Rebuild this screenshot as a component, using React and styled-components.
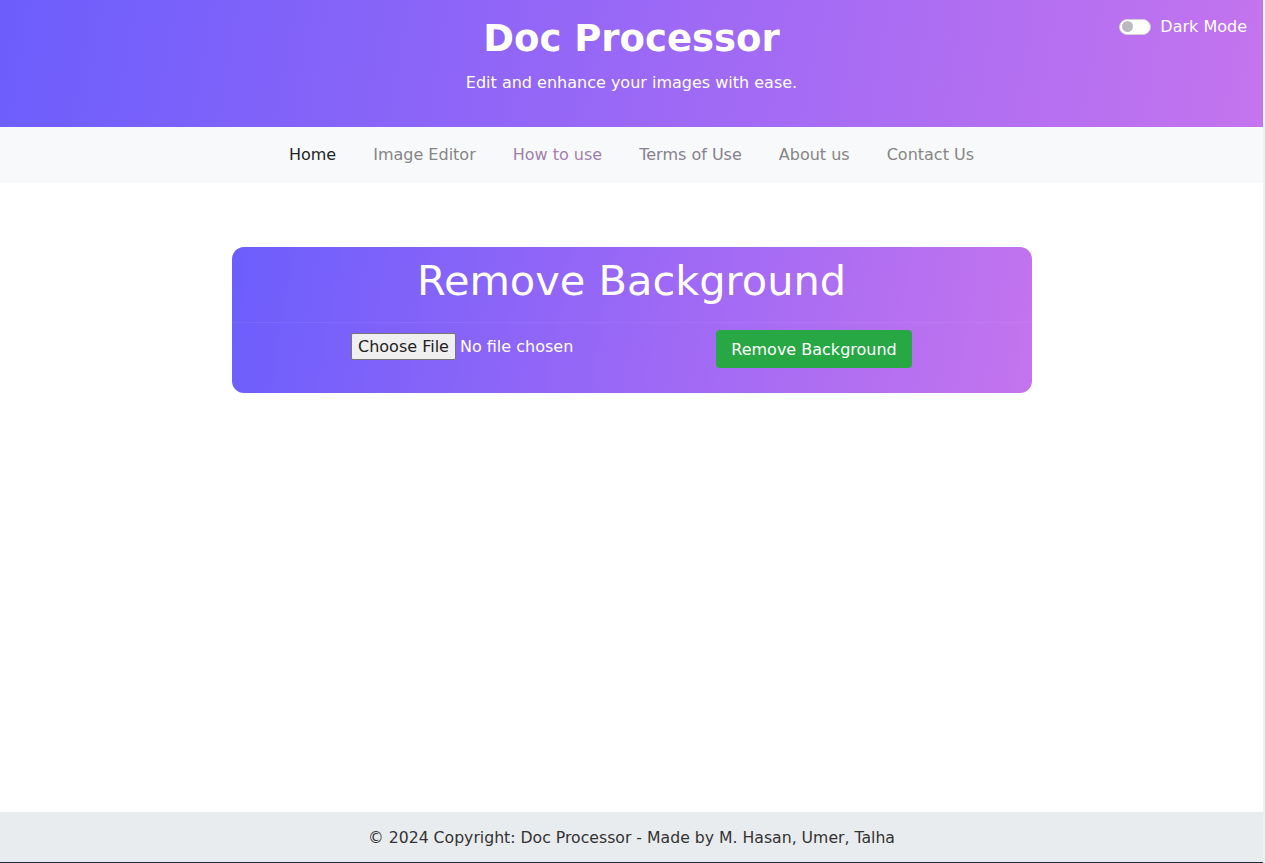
import React from "react";
import styled, { createGlobalStyle } from "styled-components";

const GlobalStyle = createGlobalStyle`
  html, body {
    margin: 0;
    padding: 0;
    background: #fff;
    font-family: "DejaVu Sans", "Liberation Sans", sans-serif;
  }
  * { box-sizing: border-box; }
`;

const Page = styled.div`
  min-height: 100vh;
  display: flex;
  flex-direction: column;
  border-right: 2px solid #f0f0f0;
`;

const Header = styled.header`
  position: relative;
  height: 127px;
  background: linear-gradient(100deg, #6c5efc 0%, #9a68f6 50%, #c474ee 100%);
  color: #fff;
  display: flex;
  flex-direction: column;
  align-items: center;
  padding-top: 17px;
`;

const Title = styled.h1`
  margin: 0;
  font-size: 37px;
  font-weight: 700;
  line-height: 44px;
`;

const Subtitle = styled.p`
  margin: 12px 0 0;
  font-size: 16px;
  line-height: 20px;
`;

const ThemeSwitch = styled.label`
  position: absolute;
  top: 17px;
  right: 16px;
  display: flex;
  align-items: center;
  gap: 9px;
  font-size: 16px;
  color: #fff;
`;

const Track = styled.span`
  width: 32px;
  height: 16px;
  border-radius: 8px;
  background: #fff;
  border: 1px solid #cfcfd6;
  display: flex;
  align-items: center;
  padding-left: 2px;
`;

const Knob = styled.span`
  width: 11px;
  height: 11px;
  border-radius: 50%;
  background: #b9b9bf;
`;

const Nav = styled.nav`
  height: 56px;
  background: #f8f9fa;
  display: flex;
  justify-content: center;
  align-items: center;
  gap: 21px;
  padding-bottom: 1px;
`;

const NavLink = styled.a`
  font-size: 16px;
  padding: 8px;
  text-decoration: none;
  color: ${(p) => (p.$active ? "#212529" : p.$tint || "#858585")};
`;

const Main = styled.main`
  flex: 1;
  display: flex;
  justify-content: center;
  align-items: flex-start;
  padding-top: 64px;
`;

const Card = styled.section`
  width: 800px;
  border-radius: 12px;
  background: linear-gradient(100deg, #6c5efc 0%, #9a68f6 50%, #c474ee 100%);
  color: #fff;
`;

const CardHeader = styled.div`
  height: 76px;
  display: flex;
  justify-content: center;
  align-items: center;
  border-bottom: 1px solid rgba(255, 255, 255, 0.06);
`;

const CardTitle = styled.h2`
  margin: 0;
  font-size: 41.5px;
  font-weight: 400;
  padding-bottom: 8px;
`;

const CardBody = styled.div`
  height: 70px;
  display: flex;
  justify-content: center;
  align-items: flex-start;
  padding-top: 7px;
`;

const FileSlot = styled.div`
  width: 365px;
  padding-top: 3px;
`;

const FileInput = styled.input`
  font-family: "DejaVu Sans", "Liberation Sans", sans-serif;
  font-size: 16px;
  color: #fff;
  &::file-selector-button {
    font-family: inherit;
    font-size: 16px;
    color: #222;
    background: #efefef;
    border: 1px solid #767676;
    border-radius: 2px;
    padding: 3px 6px;
    margin-right: 4px;
  }
`;

const ActionButton = styled.button`
  width: 196px;
  height: 38px;
  border: none;
  border-radius: 4px;
  background: #28a745;
  color: #fff;
  font-family: inherit;
  font-size: 16px;
`;

const Footer = styled.footer`
  height: 51px;
  background: #e9ecef;
  display: flex;
  justify-content: center;
  align-items: center;
  font-size: 15.7px;
  color: #333;
  border-bottom: 1px solid #1d2a3a;
`;

const links = [
  { label: "Home", active: true },
  { label: "Image Editor" },
  { label: "How to use", tint: "#a07fae" },
  { label: "Terms of Use", tint: "#86808f" },
  { label: "About us" },
  { label: "Contact Us" },
];

export default function App() {
  return (
    <Page>
      <GlobalStyle />
      <Header>
        <Title>Doc Processor</Title>
        <Subtitle>Edit and enhance your images with ease.</Subtitle>
        <ThemeSwitch>
          <Track>
            <Knob />
          </Track>
          Dark Mode
        </ThemeSwitch>
      </Header>
      <Nav>
        {links.map((l) => (
          <NavLink key={l.label} href="#" $active={l.active} $tint={l.tint}>
            {l.label}
          </NavLink>
        ))}
      </Nav>
      <Main>
        <Card>
          <CardHeader>
            <CardTitle>Remove Background</CardTitle>
          </CardHeader>
          <CardBody>
            <FileSlot>
              <FileInput type="file" />
            </FileSlot>
            <ActionButton>Remove Background</ActionButton>
          </CardBody>
        </Card>
      </Main>
      <Footer>© 2024 Copyright: Doc Processor - Made by M. Hasan, Umer, Talha</Footer>
    </Page>
  );
}
